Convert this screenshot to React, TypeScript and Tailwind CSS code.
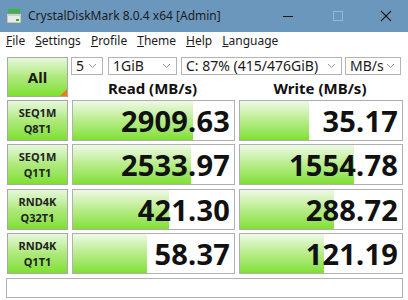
import React from "react";

const font = { fontFamily: '"Noto Sans", "Open Sans", Arial, sans-serif' };

const rows = [
  { a: "SEQ1M", b: "Q8T1", read: "2909.63", rw: 120, write: "35.17", ww: 69, mt: "mt-[3px]" },
  { a: "SEQ1M", b: "Q1T1", read: "2533.97", rw: 118, write: "1554.78", ww: 114, mt: "mt-[3px]" },
  { a: "RND4K", b: "Q32T1", read: "421.30", rw: 96, write: "288.72", ww: 94, mt: "mt-[4px]" },
  { a: "RND4K", b: "Q1T1", read: "58.37", rw: 74, write: "121.19", ww: 84, mt: "mt-[3px]" },
];

function Chevron() {
  return (
    <svg width="9" height="6" viewBox="0 0 9 6" className="shrink-0">
      <path d="M1 1 L4.5 4.5 L8 1" fill="none" stroke="#9a9a9a" strokeWidth="1" />
    </svg>
  );
}

function Select({ w, label }: { w: string; label: string }) {
  return (
    <div className={`${w} h-[18px] flex items-center justify-between border border-[#b4b4b4] bg-white pl-[4px] pr-[5px] text-[14px] text-[#1a1a1a] leading-none`}>
      <span>{label}</span>
      <Chevron />
    </div>
  );
}

function Cell({ value, width, w }: { value: string; width: number; w: string }) {
  return (
    <div className={`${w} h-full relative border border-[#b0b0b0] bg-white`}>
      <div
        className="absolute left-0 top-0 bottom-0 bg-gradient-to-b from-[#eef9e6] via-[#b8ec88] to-[#7fe02c]"
        style={{ width }}
      />
      <div className="relative h-full flex items-center justify-end pr-[4px] text-[29px] font-bold text-[#111] leading-none tracking-[0.2px]">
        {value}
      </div>
    </div>
  );
}

export default function App() {
  return (
    <div className="w-[408px] h-[300px] overflow-hidden bg-white flex flex-col" style={font}>
      {/* title bar */}
      <div className="h-[32px] bg-[#6b97bd] flex items-center shrink-0">
        <svg width="16" height="16" viewBox="0 0 16 16" className="ml-[6px]">
          <rect x="2" y="1" width="12" height="4" fill="#3cb53c" />
          <rect x="1" y="6" width="14" height="9" fill="#e8ece8" stroke="#8a948a" strokeWidth="0.8" />
          <rect x="1" y="6" width="14" height="2" fill="#c9d3c9" />
          <rect x="10" y="11" width="3" height="2" fill="#2fae2f" />
        </svg>
        <span className="ml-[6px] text-[12px] text-[#1c1c1c]">CrystalDiskMark 8.0.4 x64 [Admin]</span>
        <div className="ml-auto flex items-center h-full">
          <svg width="12" height="12" viewBox="0 0 12 12" className="mr-[38px]">
            <line x1="1" y1="6.5" x2="11" y2="6.5" stroke="#1c1c1c" strokeWidth="1" />
          </svg>
          <svg width="12" height="12" viewBox="0 0 12 12" className="mr-[36px]">
            <rect x="1.5" y="1.5" width="9" height="9" fill="none" stroke="#9bb7d0" strokeWidth="1" />
          </svg>
          <svg width="12" height="12" viewBox="0 0 12 12" className="mr-[16px]">
            <path d="M1 1 L11 11 M11 1 L1 11" stroke="#1c1c1c" strokeWidth="1.1" />
          </svg>
        </div>
      </div>

      {/* menu */}
      <div className="h-[18px] flex items-center gap-[10px] pl-[6px] text-[12px] text-[#1a1a1a] leading-none shrink-0">
        <span><u>F</u>ile</span>
        <span><u>S</u>ettings</span>
        <span><u>P</u>rofile</span>
        <span><u>T</u>heme</span>
        <span><u>H</u>elp</span>
        <span><u>L</u>anguage</span>
      </div>

      {/* controls */}
      <div className="flex pl-[7px] pt-[7px] gap-[3px]">
        <div className="w-[61px] h-[40px] relative border border-[#a8a8a8] bg-gradient-to-b from-[#e6f8da] via-[#aee97a] to-[#7ee02c] flex items-center justify-center text-[15px] font-bold text-[#1a1a1a]">
          All
          <div className="absolute right-0 bottom-0 w-0 h-0 border-l-[7px] border-l-transparent border-b-[7px] border-b-[#f07a1a]" />
        </div>
        <div className="flex flex-col">
          <div className="flex items-center">
            <Select w="w-[32px] ml-[0px]" label="5" />
            <Select w="w-[69px] ml-[5px]" label="1GiB" />
            <Select w="w-[161px] ml-[4px]" label="C: 87% (415/476GiB)" />
            <Select w="w-[56px] ml-[3px]" label="MB/s" />
          </div>
          <div className="flex h-[22px] items-end pb-[1px] text-[15px] font-bold text-[#111] leading-none">
            <div className="w-[163px] text-center">Read (MB/s)</div>
            <div className="w-[164px] ml-[4px] text-center">Write (MB/s)</div>
          </div>
        </div>
      </div>

      {/* results */}
      {rows.map((r, i) => (
        <div key={i} className={`flex pl-[7px] h-[41px] ${r.mt}`}>
          <div className="w-[61px] h-full border border-[#a8a8a8] bg-gradient-to-b from-[#e6f8da] via-[#aee97a] to-[#7ee02c] flex flex-col items-center justify-center gap-[5px] text-[11px] font-bold text-[#222] leading-none">
            <span>{r.a}</span>
            <span>{r.b}</span>
          </div>
          <Cell value={r.read} width={r.rw} w="w-[163px] ml-[4px]" />
          <Cell value={r.write} width={r.ww} w="w-[164px] ml-[4px]" />
        </div>
      ))}

      {/* status */}
      <div className="ml-[6px] mt-[4px] w-[397px] h-[20px] border border-[#b0b0b0] bg-white" />
    </div>
  );
}
